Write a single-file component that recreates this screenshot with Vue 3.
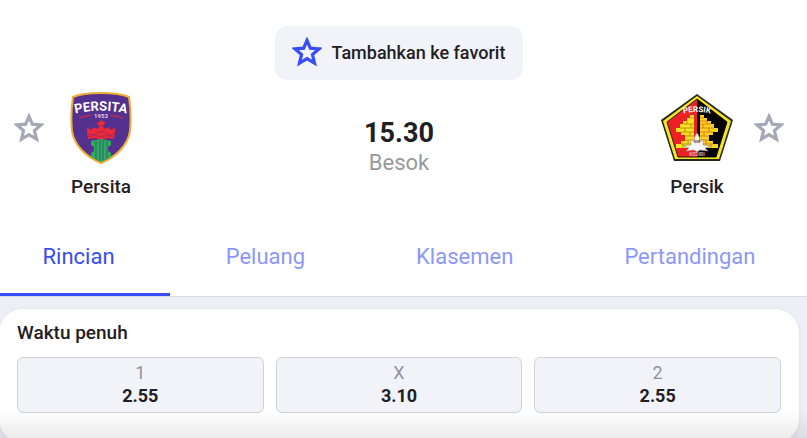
<script setup>
import { ref } from 'vue'

// 탭
const tabs = ['Rincian', 'Peluang', 'Klasemen', 'Pertandingan']
const currentTab = ref('Rincian')

// 즐겨찾기
const favorites = ref([])

function toggleFavorite(name) {
  if (favorites.value.includes(name)) {
    favorites.value = favorites.value.filter(n => n !== name)
  } else {
    favorites.value.push(name)
  }
}

// 배당
const odds = [
  { label: '1', value: '2.55' },
  { label: 'X', value: '3.10' },
  { label: '2', value: '2.55' },
]
const selectedOdd = ref(null)

const starPath = 'M15 4.2 L18.1 11.4 L26.2 12.1 L20.1 17.4 L22 25.3 L15 21.1 L8 25.3 L9.9 17.4 L3.8 12.1 L11.9 11.4 Z'
</script>

<template>
  <main class="match-page">
    <!-- 경기 정보 -->
    <header class="match-header">
      <button
        :class="['favorite-button', { active: favorites.includes('match') }]"
        @click="toggleFavorite('match')"
      >
        <svg class="star" viewBox="1 1 28 28" aria-hidden="true"><path :d="starPath" /></svg>
        <span>Tambahkan ke favorit</span>
      </button>

      <div class="match-row">
        <div class="side">
          <button
            :class="['star-button', { active: favorites.includes('Persita') }]"
            aria-label="Persita favorit"
            @click="toggleFavorite('Persita')"
          >
            <svg class="star" viewBox="1 1 28 28" aria-hidden="true"><path :d="starPath" /></svg>
          </button>
          <div class="team">
            <svg class="crest" viewBox="0 0 72 72" aria-hidden="true">
              <path d="M36 1 C47 1 57 2 64 5 C66 18 66 29 65 39 C63 53 51 65 36 71 C21 65 9 53 7 39 C6 29 6 18 8 5 C15 2 25 1 36 1 Z" fill="#54308f" stroke="#f0ad35" stroke-width="2" />
              <path id="persita-arc" d="M9 22 Q36 15 63 22" fill="none" />
              <text class="persita-name">
                <textPath href="#persita-arc" startOffset="50%" text-anchor="middle">PERSITA</textPath>
              </text>
              <text x="36" y="26" class="persita-year">1953</text>
              <path d="M14 26 Q20 23 27 23 Q21 25 14 26 Z M58 26 Q52 23 45 23 Q51 25 58 26 Z" fill="#d52a45" stroke="#d52a45" stroke-width="0.5" />
              <path d="M37 27 Q37 30 40 30 Q40 34 36 34 Q32 34 32 31 Q34 31 34 29 L35 30 Z" fill="#ed2939" />
              <path d="M22 36 L27 38 L28 35 L32 37 L36 33 L40 37 L44 35 L45 38 L50 36 L50 41 L49 47 L42 46 L36 48 L30 46 L23 47 L22 41 Z" fill="#ed2939" />
              <path d="M22 42 L27 43 L36 39 L45 43 L50 42 M23 45 L30 43 L36 45 L42 43 L49 45" fill="none" stroke="#8e2862" stroke-width="0.7" />
              <path d="M26 49 L36 47 L46 49 L46 53 L43 55 L43 59 L46 61 L46 65 L36 70 L26 65 L26 61 L29 59 L29 55 L26 53 Z" fill="#2ead58" />
              <path d="M31 49 V67 M35 48 V68 M38 48 V68 M42 49 V67" stroke="#36528a" stroke-width="0.8" />
            </svg>
            <span class="team-name">Persita</span>
          </div>
        </div>

        <div class="kickoff">
          <strong class="kickoff-time">15.30</strong>
          <span class="kickoff-day">Besok</span>
        </div>

        <div class="side away">
          <button
            :class="['star-button', { active: favorites.includes('Persik') }]"
            aria-label="Persik favorit"
            @click="toggleFavorite('Persik')"
          >
            <svg class="star" viewBox="1 1 28 28" aria-hidden="true"><path :d="starPath" /></svg>
          </button>
          <div class="team">
            <svg class="crest" viewBox="0 0 72 72" aria-hidden="true">
              <path d="M36 2 L72 28 L59 69 L13 69 L0 28 Z" fill="#292719" />
              <path d="M36 4 L70 29 L58 67 L14 67 L2 29 Z" fill="#f2e526" />
              <path d="M36 7 L66 30 L55 65 L17 65 L6 30 Z" fill="#ed2024" stroke="#242010" stroke-width="1" />
              <path d="M36 7 L66 30 L55 65 L36 65 Z" fill="#050505" />
              <path d="M33 23 H29 V26 H26 V29 H22 V32 H19 V36 H15 V40 H20 V43 H24 V49 H20 V52 H15 V56 H33 Z" fill="#f6e21f" />
              <path d="M39 23 H43 V26 H46 V29 H50 V32 H53 V36 H57 V40 H52 V43 H48 V49 H52 V52 H57 V56 H39 Z" fill="#f8d41f" />
              <path d="M29 26 H33 M22 32 H33 M19 36 H33 M20 40 H33 M24 44 H33 M24 48 H33 M20 52 H33 M26 29 V32 M30 32 V36 M24 36 V40 M29 40 V44 M27 48 V52 M22 52 V56" fill="none" stroke="#b98216" stroke-width="0.8" />
              <path d="M39 26 H43 M39 29 H46 M39 32 H50 M39 36 H53 M39 40 H52 M39 44 H48 M39 48 H48 M39 52 H52 M46 29 V32 M42 32 V36 M48 36 V40 M43 40 V44 M45 48 V52 M50 52 V56" fill="none" stroke="#e0681c" stroke-width="0.8" />
              <path d="M36 41 Q40 45 38 51 L42 47 L42 53 L50 54 L44 56 L47 59 L39 58 L36 60 L33 58 L25 59 L28 56 L22 54 L30 53 L30 47 L34 51 Q32 45 36 41 Z" fill="#f6f6f6" stroke="#99938f" stroke-width="0.6" />
              <path d="M35 48 V51 M37 48 V51" stroke="#222" stroke-width="0.8" />
              <path id="persik-arc" d="M18 23 Q36 17 54 23" fill="none" />
              <text class="persik-name">
                <textPath href="#persik-arc" startOffset="50%" text-anchor="middle">PERSIK</textPath>
              </text>
              <text x="36" y="64" class="persik-city">KEDIRI</text>
            </svg>
            <span class="team-name">Persik</span>
          </div>
        </div>
      </div>
    </header>

    <!-- 탭 -->
    <nav class="tab-bar">
      <div class="tab-list">
        <button
          v-for="tab in tabs"
          :key="tab"
          :class="['tab-button', { active: currentTab === tab }]"
          @click="currentTab = tab"
        >
          {{ tab }}
        </button>
      </div>
    </nav>

    <!-- 배당 카드 -->
    <section class="odds-card">
      <h2 class="odds-title">Waktu penuh</h2>
      <div class="odds-list">
        <button
          v-for="odd in odds"
          :key="odd.label"
          :class="['odd-button', { active: selectedOdd === odd.label }]"
          @click="selectedOdd = odd.label"
        >
          <span class="odd-label">{{ odd.label }}</span>
          <span class="odd-value">{{ odd.value }}</span>
        </button>
      </div>
    </section>

    <div class="bottom-fade"></div>
  </main>
</template>

<style>
body {
  margin: 0;
  background-color: #eceff4;
}
</style>

<style scoped>
.match-page {
  position: relative;
  height: 100vh;
  overflow: hidden;
  background-color: #eceff4;
  color: #1f2024;
  font-family: Roboto, "Liberation Sans", sans-serif;
}

button {
  font-family: inherit;
  cursor: pointer;
}

.match-header {
  display: flex;
  flex-direction: column;
  align-items: center;
  padding: 26px 23px 18px 14px;
  background-color: white;
}

.favorite-button {
  display: flex;
  align-items: center;
  gap: 10px;
  height: 54px;
  padding: 0 18px 2px 17px;
  border: none;
  border-radius: 12px;
  background-color: #f2f3f8;
  color: #1f2024;
  font-size: 18px;
  font-weight: 500;
}

.star {
  display: block;
  width: 30px;
  height: 30px;
  fill: none;
  stroke: #a5a9b5;
  stroke-width: 3;
}

.favorite-button .star,
.star-button.active .star {
  stroke: #374df5;
}

.favorite-button.active .star,
.star-button.active .star {
  fill: #374df5;
}

.match-row {
  display: flex;
  justify-content: space-between;
  align-items: flex-start;
  width: 100%;
  margin-top: 12px;
}

.side {
  display: flex;
  align-items: flex-start;
  gap: 19px;
}

.side.away {
  flex-direction: row-reverse;
}

.star-button {
  margin-top: 21px;
  padding: 0;
  border: none;
  background: none;
}

.team {
  display: flex;
  flex-direction: column;
  align-items: center;
  gap: 10px;
  width: 76px;
}

.crest {
  width: 72px;
  height: 72px;
}

.crest text {
  font-weight: 700;
}

.persita-name {
  fill: white;
  font-size: 13px;
}

.persita-year {
  fill: #d9cdee;
  font-size: 6px;
  text-anchor: middle;
}

.persik-name {
  fill: white;
  font-size: 8px;
}

.persik-city {
  fill: #d8aaa8;
  font-size: 5px;
  text-anchor: middle;
}

.team-name {
  font-size: 19px;
  font-weight: 500;
  line-height: 26px;
}

.kickoff {
  display: flex;
  flex-direction: column;
  align-items: center;
  padding-top: 25px;
}

.kickoff-time {
  font-size: 27px;
  font-weight: 700;
  line-height: 32px;
}

.kickoff-day {
  color: #98999d;
  font-size: 22px;
  line-height: 28px;
}

.tab-bar {
  overflow: hidden;
  border-bottom: 1px solid #d9dbde;
  background-color: white;
}

.tab-list {
  display: flex;
  margin: 0 -4px 0 -13px;
}

.tab-button {
  flex: 1 1 auto;
  height: 78px;
  padding: 2px 0 0;
  border: none;
  border-bottom: 3px solid transparent;
  background: none;
  color: #8b98fb;
  font-size: 22px;
  font-weight: 400;
}

.tab-button.active {
  color: #374df5;
  border-bottom-color: #374df5;
}

.odds-card {
  margin: 12px 8px 0 -1px;
  padding: 12px 18px 30px;
  border-radius: 24px;
  background-color: white;
  box-shadow: 0 1px 4px rgba(0, 0, 0, 0.08);
}

.odds-title {
  margin: 0 0 12px;
  font-size: 19px;
  font-weight: 500;
  line-height: 24px;
}

.odds-list {
  display: grid;
  grid-template-columns: repeat(3, 1fr);
  gap: 12px;
}

.odd-button {
  display: flex;
  flex-direction: column;
  align-items: center;
  justify-content: center;
  height: 56px;
  padding: 0 0 2px;
  border: 1px solid #d0d2d8;
  border-radius: 6px;
  background-color: #f2f3f8;
  color: #1f2024;
  font-size: 18px;
  line-height: 23px;
}

.odd-button.active {
  border-color: #374df5;
}

.odd-label {
  color: #929397;
}

.odd-value {
  font-weight: 700;
}

/* 하단 그림자 */
.bottom-fade {
  position: absolute;
  right: 0;
  bottom: 0;
  left: 0;
  height: 28px;
  background: linear-gradient(rgba(0, 0, 0, 0), rgba(0, 0, 0, 0.08));
  pointer-events: none;
}
</style>
